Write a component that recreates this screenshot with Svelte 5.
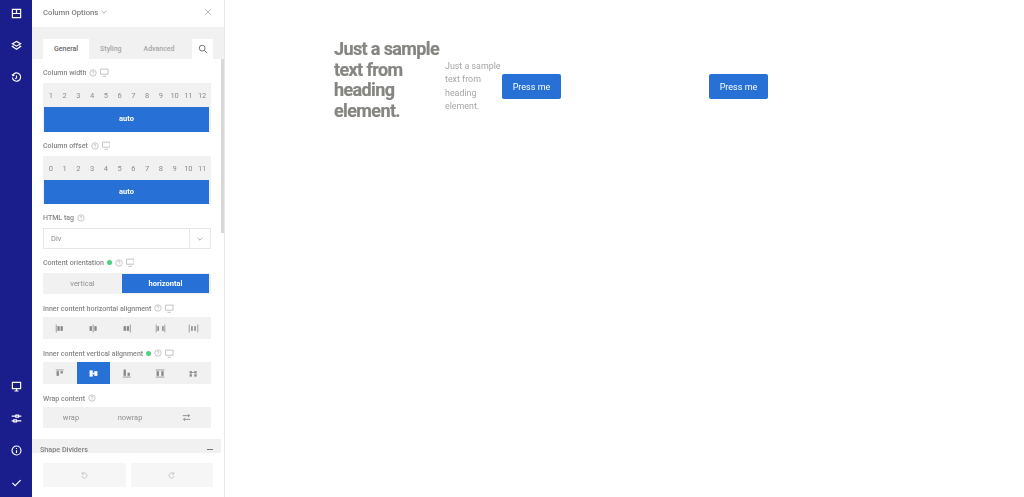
<script>
    // column options panel + canvas preview
    const widths = ['1', '2', '3', '4', '5', '6', '7', '8', '9', '10', '11', '12'];
    const offsets = ['0', '1', '2', '3', '4', '5', '6', '7', '8', '9', '10', '11'];

    // little bars for alignment buttons: [x, y, w, h]
    const hAlign = [
        [[1, 2, 1, 10], [3, 4, 3, 6], [7, 4, 3, 6]],
        [[2, 4, 3, 6], [6, 2, 1, 10], [8, 4, 3, 6]],
        [[2, 4, 3, 6], [6, 4, 3, 6], [10, 2, 1, 10]],
        [[1, 2, 1, 10], [3, 4, 2, 6], [9, 4, 2, 6], [12, 2, 1, 10]],
        [[1, 2, 1, 10], [4, 4, 2, 6], [8, 4, 2, 6], [12, 2, 1, 10]]
    ];
    const vAlign = [
        [[1, 2, 10, 1], [2, 4, 3, 6], [7, 4, 3, 3]],
        [[2, 3, 4, 8], [8, 4, 4, 6], [6, 6, 2, 2]],
        [[2, 2, 3, 8], [7, 6, 3, 4], [1, 11, 10, 1]],
        [[1, 2, 11, 1], [2, 4, 3, 6], [8, 4, 3, 6], [1, 11, 11, 1]],
        [[2, 4, 3, 3], [8, 4, 3, 3], [2, 8, 3, 3], [8, 8, 3, 3], [5, 5, 3, 1]]
    ];
</script>

<div class="page">
    <nav class="rail">
        <div class="rail-group">
            <svg viewBox="0 0 16 16"><path d="M2 2h12v12H2zM2 8h12M8 2v6" /></svg>
            <svg viewBox="0 0 16 16"><path d="M8 2l6 3.500L8 9 2 5.500zM3.500 8.500L2 9.500 8 13.500l6-4-1.500-1" /></svg>
            <svg viewBox="0 0 16 16"><path d="M3 4a6 6 0 1 1-1 4M1.500 3.500L3 5.500l2-1M8 5v3.500L6 10" /></svg>
        </div>
        <div class="rail-group">
            <svg viewBox="0 0 16 16"><path d="M2 2h12v9H2zM5 14.500h6M8 11v3" /></svg>
            <svg viewBox="0 0 16 16"><path d="M1 4.500h6M11 4.500h4M1 11.500h3M8 11.500h7M7 3v3h4V3zM4 10v3h4v-3z" /></svg>
            <svg viewBox="0 0 16 16"><circle cx="8" cy="8" r="6.500" /><path d="M8 4.500v1.200M8 7.500V11.500" /></svg>
            <svg viewBox="0 0 16 16"><path d="M2 8.500L6 12.500 14 4.500" /></svg>
        </div>
    </nav>

    <aside class="panel">
        <header class="panel-head">
            <span class="panel-title">Column Options</span>
            <svg class="chev" viewBox="0 0 10 10"><path d="M2 3.500L5 6.500 8 3.500" /></svg>
            <svg class="close" viewBox="0 0 10 10"><path d="M1.500 1.500l7 7M8.500 1.500l-7 7" /></svg>
        </header>

        <div class="tabs">
            <div class="tab active">General</div>
            <div class="tab">Styling</div>
            <div class="tab">Advanced</div>
            <div class="tab-search">
                <svg viewBox="0 0 12 12"><circle cx="5" cy="5" r="3.500" /><path d="M7.500 7.500L11 11" /></svg>
            </div>
        </div>

        <div class="scroll">
            <div class="scrollbar"></div>

            <div class="label">Column width
                {@render help()}
                {@render monitor()}
            </div>
            <div class="grid-box first">
                <div class="nums">
                    {#each widths as n}<span>{n}</span>{/each}
                </div>
                <div class="auto">auto</div>
            </div>

            <div class="label">Column offset
                {@render help()}
                {@render monitor()}
            </div>
            <div class="grid-box">
                <div class="nums">
                    {#each offsets as n}<span>{n}</span>{/each}
                </div>
                <div class="auto">auto</div>
            </div>

            <div class="label">HTML tag {@render help()}</div>
            <div class="select">
                <span class="select-value">Div</span>
                <span class="select-arrow">
                    <svg class="chev" viewBox="0 0 10 10"><path d="M2 3.500L5 6.500 8 3.500" /></svg>
                </span>
            </div>

            <div class="label">Content orientation
                <i class="dot"></i>
                {@render help()}
                {@render monitor()}
            </div>
            <div class="seg">
                <span class="seg-half">vertical</span>
                <span class="seg-half on">horizontal</span>
            </div>

            <div class="label tight">Inner content horizontal alignment
                {@render help()}
                {@render monitor()}
            </div>
            <div class="icons-row">
                {#each hAlign as bars}
                    <span class="icon-btn">{@render alignIcon(bars)}</span>
                {/each}
            </div>

            <div class="label tight">Inner content vertical alignment
                <i class="dot"></i>
                {@render help()}
                {@render monitor()}
            </div>
            <div class="icons-row">
                {#each vAlign as bars, i}
                    <span class="icon-btn" class:on={i === 1}>{@render alignIcon(bars)}</span>
                {/each}
            </div>

            <div class="label tight">Wrap content {@render help()}</div>
            <div class="wrap-row">
                <span class="wrap-opt">wrap</span>
                <span class="wrap-opt">nowrap</span>
                <span class="wrap-opt">
                    <svg viewBox="0 0 12 12"><path d="M1 3.500h9M8 1.500l2 2-2 2M11 8.500H2M4 6.500l-2 2 2 2" /></svg>
                </span>
            </div>

            <div class="section">
                <span>Shape Dividers</span>
                <i class="minus"></i>
            </div>
        </div>

        <footer class="panel-foot">
            <div class="foot-btn">
                <svg viewBox="0 0 12 12"><path d="M3 1.500v2.500h2.500M3 4a3.500 3.500 0 1 1 -.5 3" /></svg>
            </div>
            <div class="foot-btn">
                <svg viewBox="0 0 12 12"><path d="M9 1.500v2.500H6.500M9 4a3.500 3.500 0 1 0 .5 3" /></svg>
            </div>
        </footer>
    </aside>

    <main class="canvas">
        <div class="col-left">
            <h1>Just a sample text from heading element.</h1>
            <p>Just a sample text from heading element.</p>
            <button>Press me</button>
        </div>
        <div class="col-right">
            <button>Press me</button>
        </div>
    </main>
</div>

{#snippet help()}
    <svg class="help" viewBox="0 0 10 10"><circle cx="5" cy="5" r="4" /><path d="M3.800 4a1.200 1.200 0 1 1 1.700 1.100c-.4.200-.5.400-.5.800M5 7v.6" /></svg>
{/snippet}

{#snippet monitor()}
    <svg class="monitor" viewBox="0 0 10 10"><path d="M.500 1h9v6h-9zM3 9.500h4" /></svg>
{/snippet}

{#snippet alignIcon(bars)}
    <svg class="align" viewBox="0 0 14 14">
        {#each bars as b}
            <rect x={b[0]} y={b[1]} width={b[2]} height={b[3]} />
        {/each}
    </svg>
{/snippet}

<style>
    :global(body) {
        margin: 0;
        background: #fff;
        font-family: Roboto, "Liberation Sans", sans-serif;
    }

    .page {
        display: flex;
        height: 497px;
        overflow: hidden;
    }

    .rail {
        width: 32px;
        flex-shrink: 0;
        background: #1a1e8c;
        display: flex;
        flex-direction: column;
        justify-content: space-between;
        align-items: center;
        padding: 8px 0 9px;
        box-sizing: border-box;
    }

    .rail-group {
        display: flex;
        flex-direction: column;
        gap: 21px;
    }

    .rail svg {
        display: block;
        width: 11px;
        height: 11px;
        fill: none;
        stroke: #fff;
        stroke-width: 1.700;
    }

    .panel {
        width: 193px;
        flex-shrink: 0;
        border-right: 1px solid #e8e8e8;
        box-sizing: border-box;
        display: flex;
        flex-direction: column;
        color: #6e6e6e;
        will-change: opacity;
    }

    .panel-head {
        height: 27px;
        flex-shrink: 0;
        display: flex;
        align-items: center;
        padding: 0 12px 3px 11px;
        box-sizing: border-box;
    }

    .panel-title {
        font-size: 7.700px;
        font-weight: 500;
        color: #808080;
    }

    .chev {
        width: 8px;
        height: 8px;
        margin-left: 2px;
        fill: none;
        stroke: #999;
        stroke-width: 1;
    }

    .close {
        width: 8px;
        height: 8px;
        margin-left: auto;
        fill: none;
        stroke: #aaa;
        stroke-width: 1;
    }

    .tabs {
        height: 32px;
        flex-shrink: 0;
        background: #f1f1f1;
        display: flex;
        align-items: flex-end;
        padding: 0 11px;
        box-sizing: border-box;
    }

    .tab {
        height: 20px;
        line-height: 20px;
        padding: 0 11px;
        font-size: 7px;
        color: #a5a5a5;
        font-weight: 500;
    }

    .tab.active {
        background: #fff;
        color: #666;
    }

    .tab-search {
        width: 21px;
        height: 20px;
        background: #fff;
        margin-left: auto;
        display: flex;
        align-items: center;
        justify-content: center;
    }

    .tab-search svg {
        width: 10px;
        height: 10px;
        fill: none;
        stroke: #777;
        stroke-width: 1.200;
    }

    .scroll {
        position: relative;
        flex: 1;
        min-height: 0;
        overflow: hidden;
        padding: 0 12px 0 11px;
    }

    .scrollbar {
        position: absolute;
        right: 0;
        top: 0;
        width: 3px;
        height: 174px;
        background: #d8d8d8;
    }

    .label {
        height: 24px;
        display: flex;
        align-items: center;
        gap: 3px;
        padding-top: 3px;
        box-sizing: border-box;
        font-size: 7.050px;
        font-weight: 500;
        color: #878787;
        white-space: nowrap;
    }

    .label.tight {
        height: 23px;
        padding-top: 5px;
    }

    .help {
        width: 8px;
        height: 8px;
        fill: none;
        stroke: #aaa;
        stroke-width: .8;
    }

    .monitor {
        width: 8.500px;
        height: 9px;
        fill: none;
        stroke: #aaa;
        stroke-width: .8;
    }

    .dot {
        width: 5px;
        height: 5px;
        border-radius: 50%;
        background: #4fd07f;
    }

    .grid-box {
        width: 168px;
        background: #f1f1f1;
        box-sizing: border-box;
        padding: 0 2px 0 1px;
    }

    .nums {
        height: 24px;
        display: grid;
        grid-template-columns: repeat(12, 1fr);
        align-items: center;
        text-align: center;
        font-size: 7.500px;
        color: #8c8c8c;
    }

    .auto {
        height: 24px;
        line-height: 24px;
        background: #2670d6;
        color: #fff;
        text-align: center;
        font-size: 7.500px;
        font-weight: 700;
    }

    .grid-box.first .auto {
        height: 25px;
    }

    .select {
        width: 168px;
        height: 21px;
        box-sizing: border-box;
        border: 1px solid #e6e6e6;
        display: flex;
        align-items: center;
        font-size: 7.500px;
        color: #8a8a8a;
    }

    .select-value {
        flex: 1;
        padding-left: 7px;
    }

    .select-arrow {
        width: 20px;
        height: 100%;
        border-left: 1px solid #e6e6e6;
        display: flex;
        align-items: center;
        justify-content: center;
    }

    .select-arrow .chev {
        margin: 0;
    }

    .seg {
        width: 168px;
        height: 21px;
        background: #f1f1f1;
        display: flex;
        padding: 1px 2px 1px 0;
        box-sizing: border-box;
        font-size: 7.500px;
        color: #909090;
    }

    .seg-half {
        display: flex;
        align-items: center;
        justify-content: center;
        width: 79px;
    }

    .seg-half.on {
        width: 87px;
        background: #2670d6;
        color: #fff;
        font-weight: 700;
    }

    .icons-row {
        width: 168px;
        height: 22px;
        background: #f1f1f1;
        display: flex;
        box-sizing: border-box;
        padding: 0 1px;
    }

    .icon-btn {
        flex: 1;
        display: flex;
        align-items: center;
        justify-content: center;
    }

    .icon-btn.on {
        background: #2670d6;
    }

    .align {
        width: 11px;
        height: 11px;
        fill: #8a8a8a;
    }

    .icon-btn.on .align {
        fill: #fff;
    }

    .wrap-row {
        width: 168px;
        height: 21px;
        background: #f1f1f1;
        display: grid;
        grid-template-columns: 56px 62px 50px;
        font-size: 7.500px;
        color: #909090;
    }

    .wrap-opt {
        display: flex;
        align-items: center;
        justify-content: center;
    }

    .wrap-opt svg {
        width: 9px;
        height: 9px;
        fill: none;
        stroke: #777;
        stroke-width: 1;
    }

    .section {
        height: 14px;
        margin: 11px -9px 0 -11px;
        padding: 7px 8px 0;
        box-sizing: border-box;
        background: #f1f1f1;
        display: flex;
        align-items: center;
        justify-content: space-between;
        font-size: 7.200px;
        font-weight: 500;
        color: #808080;
    }

    .minus {
        width: 6px;
        height: 1px;
        background: #777;
    }

    .panel-foot {
        height: 44px;
        flex-shrink: 0;
        display: flex;
        gap: 5px;
        padding: 10px 11px;
        box-sizing: border-box;
    }

    .foot-btn {
        flex: 1;
        background: #f6f6f6;
        display: flex;
        align-items: center;
        justify-content: center;
    }

    .foot-btn svg {
        width: 9px;
        height: 9px;
        fill: none;
        stroke: #bbb;
        stroke-width: 1;
    }

    .canvas {
        flex: 1;
        display: flex;
        align-items: flex-start;
        padding: 39px 0 0 109px;
        will-change: opacity;
    }

    .col-left {
        display: flex;
        align-items: center;
        width: 375px;
    }

    .col-right {
        display: flex;
        align-items: center;
        height: 82px;
    }

    h1 {
        width: 111px;
        flex-shrink: 0;
        margin: 0;
        font-size: 18px;
        font-weight: 700;
        line-height: 20.500px;
        letter-spacing: -.62px;
        color: #858581;
        -webkit-text-stroke: .2px #858581;
    }

    p {
        width: 57px;
        flex-shrink: 0;
        margin: 13px 0 0;
        font-size: 8.900px;
        line-height: 13.300px;
        color: #a6a6a6;
    }

    button {
        width: 59px;
        height: 25px;
        margin-top: 13px;
        padding: 0;
        border: none;
        border-radius: 2px;
        background: #2670d6;
        color: #fff;
        font-family: inherit;
        font-size: 9px;
        flex-shrink: 0;
    }
</style>
